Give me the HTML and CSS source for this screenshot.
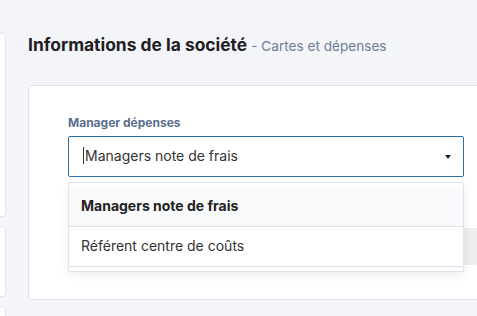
FILE: index.html
```html
<!DOCTYPE html>
<html lang="fr">
<head>
    <meta charset="UTF-8">
    <meta name="viewport" content="width=device-width, initial-scale=1.0">
    <title>Informations de la société</title>
    <link rel="stylesheet" href="styles.css">
</head>
<body>
    <div class="layout">
        <aside class="sidebar">
            <div class="side-card tall"></div>
            <div class="side-card short"></div>
            <div class="side-card"></div>
        </aside>

        <main class="main">
            <h1 class="page-title">Informations de la société <span class="subtitle">- Cartes et dépenses</span></h1>

            <section class="card">
                <label class="field-label">Manager dépenses</label>
                <div class="select-wrap">
                    <div class="select">
                        <span class="caret-line"></span>
                        <span class="select-value">Managers note de frais</span>
                        <span class="arrow"></span>
                    </div>
                    <ul class="menu">
                        <li class="menu-item active">Managers note de frais</li>
                        <li class="menu-item">Référent centre de coûts</li>
                    </ul>
                </div>
                <div class="grey-row"></div>
            </section>
        </main>
    </div>
</body>
</html>
```

FILE: styles.css
```css
body {
    margin: 0;
    background-color: #f4f5f8;
    font-family: Inter, "Noto Sans", sans-serif;
    color: #222;
    overflow: hidden;
}
.layout { display: flex; gap: 22px; padding-top: 33px; }

.sidebar { width: 200px; margin-left: -194px; display: flex; flex-direction: column; gap: 9px; flex-shrink: 0; }
.side-card { background: #fff; border: 1px solid #e2e5ea; border-radius: 4px; height: 100px; }
.side-card.tall { height: 182px; }
.side-card.short { height: 69px; }

.main { flex-shrink: 0; width: 620px; }
.page-title { margin: 0 0 27px; font-size: 17.4px; line-height: 24px; font-weight: 700; color: #1f2023; }
.subtitle { font-size: 13.6px; font-weight: 400; color: #6b7d96; }

.card { background: #fff; border: 1px solid #dde1e8; border-radius: 4px; padding: 29px 39px 34px; }
.field-label { display: block; font-size: 12px; line-height: 16px; font-weight: 700; color: #5b6f8c; margin-bottom: 5px; }

.select-wrap { position: relative; width: 396px; }
.select { box-sizing: border-box; height: 41px; border: 1px solid #2c6fa5; border-radius: 2px; display: flex; align-items: center; padding: 0 12px 2px 14px; font-size: 14px; color: #333; }
.caret-line { width: 1px; height: 17px; background: #333; margin-right: 1px; }
.select-value { flex: 1; }
.arrow { width: 0; height: 0; border-left: 3px solid transparent; border-right: 3px solid transparent; border-top: 4px solid #222; margin-top: 2px; }

.menu { position: absolute; top: 46px; left: 0; right: 0; z-index: 2; margin: 0; padding: 4px 0; list-style: none; background: #fff; border: 1px solid #dfe3ea; border-radius: 2px; box-shadow: 0 3px 8px rgba(30, 40, 60, 0.08); }
.menu-item { height: 39px; line-height: 37px; padding: 0 12px; font-size: 14px; color: #333; border-bottom: 1px solid #dde1e8; }
.menu-item.active { background: #f9fafb; font-weight: 700; color: #222; }

.grey-row { margin-top: 51px; height: 37px; background: #eeeeee; }
```
